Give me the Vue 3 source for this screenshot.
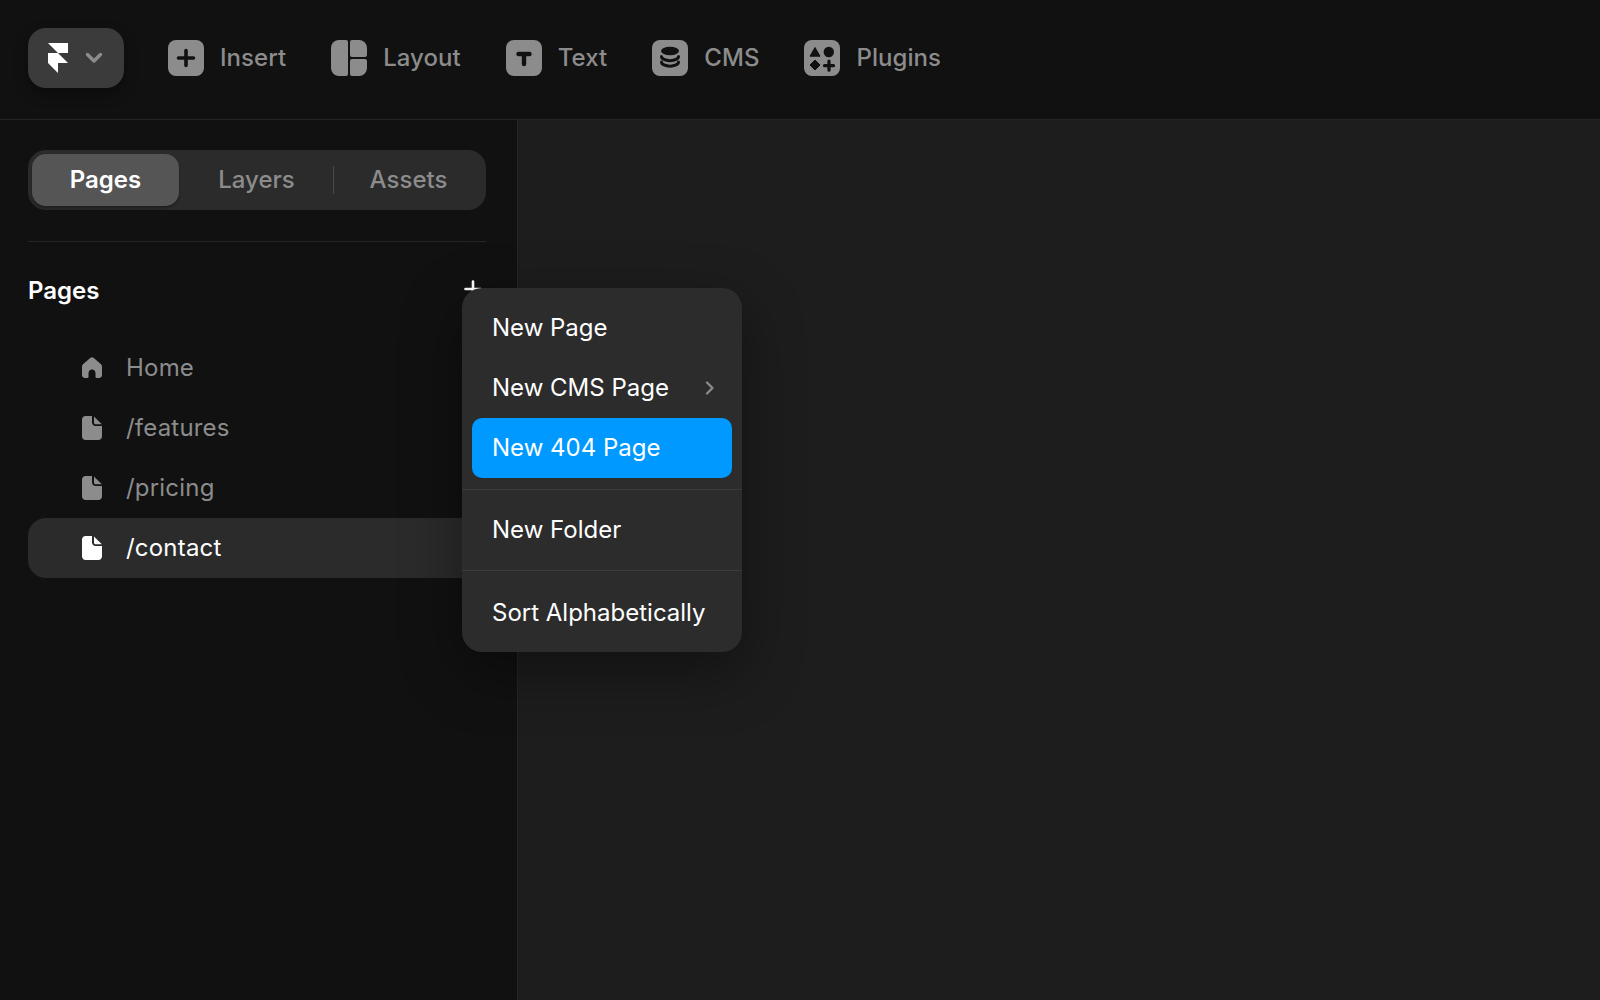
<script setup>
const tools = [
  { name: 'Insert', icon: 'insert' },
  { name: 'Layout', icon: 'layout' },
  { name: 'Text', icon: 'text' },
  { name: 'CMS', icon: 'cms' },
  { name: 'Plugins', icon: 'plugins' },
]

const pages = [
  { name: 'Home', icon: 'home' },
  { name: '/features', icon: 'doc' },
  { name: '/pricing', icon: 'doc' },
  { name: '/contact', icon: 'doc', active: true },
]
</script>

<template>
  <div class="app">
    <header class="topbar">
      <button type="button" class="logo-btn">
        <svg class="logo" width="20" height="30" viewBox="0 0 20 30" aria-hidden="true">
          <path d="M0 0h20v10H10L0 0zM0 10h10l10 10H10v10L0 20V10z" fill="#fff" />
        </svg>
        <svg width="18" height="12" viewBox="0 0 18 12" aria-hidden="true">
          <path d="M2.500 2.500 9 9l6.500-6.500" fill="none" stroke="#8c8c8c" stroke-width="3.400" stroke-linecap="round" stroke-linejoin="round" />
        </svg>
      </button>

      <nav class="tools">
        <a v-for="tool in tools" :key="tool.name" class="tool">
          <svg v-if="tool.icon === 'insert'" width="36" height="36" viewBox="0 0 36 36" aria-hidden="true">
            <rect width="36" height="36" rx="8" fill="#8c8c8c" />
            <path d="M18 10.500v15M10.500 18h15" stroke="#111" stroke-width="3.600" stroke-linecap="round" />
          </svg>
          <svg v-else-if="tool.icon === 'layout'" width="36" height="36" viewBox="0 0 36 36" aria-hidden="true">
            <path d="M8 0h7a2 2 0 0 1 2 2v32a2 2 0 0 1-2 2H8a8 8 0 0 1-8-8V8a8 8 0 0 1 8-8z" fill="#8c8c8c" />
            <path d="M21 0h7a8 8 0 0 1 8 8v7a2 2 0 0 1-2 2H21a2 2 0 0 1-2-2V2a2 2 0 0 1 2-2zM21 19h13a2 2 0 0 1 2 2v7a8 8 0 0 1-8 8h-7a2 2 0 0 1-2-2V21a2 2 0 0 1 2-2z" fill="#8c8c8c" />
          </svg>
          <svg v-else-if="tool.icon === 'text'" width="36" height="36" viewBox="0 0 36 36" aria-hidden="true">
            <rect width="36" height="36" rx="8" fill="#8c8c8c" />
            <path d="M12.500 14h11M18 14v10" stroke="#111" stroke-width="4.400" stroke-linecap="round" />
          </svg>
          <svg v-else-if="tool.icon === 'cms'" width="36" height="36" viewBox="0 0 36 36" aria-hidden="true">
            <rect width="36" height="36" rx="8" fill="#8c8c8c" />
            <ellipse cx="18" cy="11" rx="9" ry="4.200" fill="#111" />
            <path d="M9.500 16.500c0 2.300 3.800 4.200 8.500 4.200s8.500-1.900 8.500-4.200M9.500 22c0 2.300 3.800 4.200 8.500 4.200s8.500-1.900 8.500-4.200" fill="none" stroke="#111" stroke-width="3" stroke-linecap="round" />
          </svg>
          <svg v-else width="36" height="36" viewBox="0 0 36 36" aria-hidden="true">
            <rect width="36" height="36" rx="8" fill="#8c8c8c" />
            <path d="M11 7.500 16 16.200H6L11 7.500z" fill="#111" stroke="#111" stroke-linejoin="round" />
            <circle cx="24.800" cy="12" r="5.200" fill="#111" />
            <path d="M11 20 16 25 11 30 6 25 11 20z" fill="#111" stroke="#111" stroke-linejoin="round" />
            <path d="M25 21.200v9M20.500 25.700h9" stroke="#111" stroke-width="3.200" stroke-linecap="round" />
          </svg>
          <span>{{ tool.name }}</span>
        </a>
      </nav>
    </header>

    <div class="body">
      <aside class="sidebar">
        <div class="tabs">
          <span class="tab is-active"><b>Pages</b></span>
          <span class="tab tab-layers">Layers</span>
          <i class="tab-sep"></i>
          <span class="tab tab-assets">Assets</span>
        </div>

        <hr class="rule" />

        <div class="section-head">
          <h2>Pages</h2>
          <svg width="18" height="18" viewBox="0 0 18 18" aria-hidden="true">
            <path d="M9 1.500v15M1.500 9h15" stroke="#fff" stroke-width="2.600" stroke-linecap="round" />
          </svg>
        </div>

        <ul class="page-list">
          <li v-for="page in pages" :key="page.name" class="page-row" :class="{ 'is-active': page.active }">
            <svg v-if="page.icon === 'home'" class="page-icon" width="20" height="22" viewBox="0 0 20 22" aria-hidden="true">
              <path d="M8.200 1 1 7.200C.400 7.800 0 8.600 0 9.500V18c0 1.900 1.500 3 3 3h2.200c.8 0 1.300-.6 1.300-1.300V16c0-1.900 1.500-3.500 3.500-3.500s3.500 1.600 3.500 3.500v3.700c0 .7.500 1.300 1.300 1.300H17c1.500 0 3-1.100 3-3V9.500c0-.9-.4-1.700-1-2.300L11.800 1c-1-.9-2.600-.9-3.600 0z" fill="currentColor" />
            </svg>
            <svg v-else class="page-icon" width="20" height="24" viewBox="0 0 20 24" aria-hidden="true">
              <path d="M3.500 0H10v6.500C10 8.400 11.600 10 13.500 10H20v10.500c0 1.900-1.600 3.500-3.500 3.500h-13C1.600 24 0 22.400 0 20.500v-17C0 1.600 1.600 0 3.500 0z" fill="currentColor" />
              <path d="M12 .400 19.800 8.200H13.500c-.8 0-1.500-.7-1.500-1.500V.400z" fill="currentColor" />
            </svg>
            <span>{{ page.name }}</span>
          </li>
        </ul>
      </aside>

      <main class="canvas"></main>
    </div>

    <div class="menu">
      <div class="menu-item">New Page</div>
      <div class="menu-item">
        New CMS Page
        <svg class="menu-arrow" width="10" height="14" viewBox="0 0 10 14" aria-hidden="true">
          <path d="M2 1.500 7.500 7 2 12.500" fill="none" stroke="#8c8c8c" stroke-width="2.200" stroke-linecap="round" stroke-linejoin="round" />
        </svg>
      </div>
      <div class="menu-item is-hover">New 404 Page</div>
      <div class="menu-sep"></div>
      <div class="menu-item">New Folder</div>
      <div class="menu-sep"></div>
      <div class="menu-item">Sort Alphabetically</div>
    </div>
  </div>
</template>

<style scoped>
.app {
  position: relative;
  display: flex;
  flex-direction: column;
  height: 1000px;
  overflow: hidden;
  color: #fff;
  background: #1d1d1d;
  font-family: Inter, "Liberation Sans", sans-serif;
}

.topbar {
  display: flex;
  flex: none;
  align-items: flex-start;
  gap: 44px;
  box-sizing: border-box;
  height: 120px;
  padding: 28px;
  border-bottom: 1px solid #252525;
  background: #111111;
}

.logo-btn {
  display: flex;
  flex: none;
  align-items: center;
  gap: 17px;
  box-sizing: border-box;
  width: 96px;
  height: 60px;
  padding: 0 0 0 20px;
  border: 0;
  border-radius: 18px;
  background: #3b3b3b;
  box-shadow: 0 6px 14px rgba(0, 0, 0, 0.35);
}

.tools {
  display: flex;
  gap: 45px;
  margin-top: 12px;
}

.tool {
  display: flex;
  align-items: center;
  gap: 16px;
  color: #8c8c8c;
  font-size: 24px;
  font-weight: 500;
  letter-spacing: 0.05px;
}

.tool span {
  margin-bottom: 2px;
}

.body {
  display: flex;
  flex: 1;
  min-height: 0;
}

.sidebar {
  box-sizing: border-box;
  flex: none;
  width: 518px;
  padding: 30px 31px 0 28px;
  border-right: 1px solid #252525;
  background: #111111;
}

.tabs {
  display: flex;
  align-items: center;
  box-sizing: border-box;
  height: 60px;
  padding: 4px;
  border-radius: 18px;
  background: #2b2b2b;
}

.tab {
  flex: none;
  padding-bottom: 2px;
  color: #8c8c8c;
  font-size: 24px;
  font-weight: 500;
  text-align: center;
}

.tab.is-active {
  display: flex;
  align-items: center;
  justify-content: center;
  box-sizing: border-box;
  width: 147px;
  height: 52px;
  border-radius: 14px;
  color: #fff;
  background: #555555;
  box-shadow: 0 2px 3px rgba(0, 0, 0, 0.3);
}

.tab.is-active b {
  font-weight: 600;
}

.tab-layers {
  width: 155px;
}

.tab-sep {
  flex: none;
  width: 1px;
  height: 28px;
  margin: 0 1px 0 -1px;
  background: #4a4a4a;
}

.tab-assets {
  flex: 1;
}

.rule {
  height: 1px;
  margin: 31px 0 0;
  border: 0;
  background: #252525;
}

.section-head {
  display: flex;
  align-items: center;
  justify-content: space-between;
  height: 30px;
  margin-top: 33px;
  padding-right: 4px;
}

.section-head h2 {
  margin: 0;
  font-size: 24px;
  font-weight: 600;
}

.section-head svg {
  margin-bottom: 3px;
}

.page-list {
  margin: 33px 0 0;
  padding: 0;
  list-style: none;
}

.page-row {
  display: flex;
  align-items: center;
  box-sizing: border-box;
  height: 60px;
  padding-left: 54px;
  border-radius: 18px;
  color: #8c8c8c;
  font-size: 24px;
  letter-spacing: 0.2px;
}

.page-row span {
  margin-bottom: 2px;
}

.page-row.is-active {
  color: #fff;
  background: #2b2b2b;
}

.page-icon {
  flex: none;
  margin-right: 24px;
}

.menu {
  position: absolute;
  top: 288px;
  left: 462px;
  box-sizing: border-box;
  width: 280px;
  padding: 10px 0;
  border-radius: 20px;
  background: #2c2c2c;
  box-shadow: 0 20px 60px rgba(0, 0, 0, 0.4);
}

.menu-item {
  display: flex;
  align-items: center;
  justify-content: space-between;
  box-sizing: border-box;
  height: 60px;
  margin: 0 10px;
  padding: 0 20px 2px;
  border-radius: 10px;
  font-size: 24px;
  font-weight: 380;
}

.menu-item:last-child {
  margin-top: 11px;
  padding-bottom: 0;
}

.menu-item.is-hover {
  background: #0099ff;
}

.menu-arrow {
  margin: 2px -3px 0 0;
}

.menu-sep {
  height: 1px;
  margin: 10px 0;
  background: #3c3c3c;
}

.is-hover + .menu-sep {
  margin-top: 11px;
}
</style>

<style>
html,
body {
  background: #111111;
}
</style>
